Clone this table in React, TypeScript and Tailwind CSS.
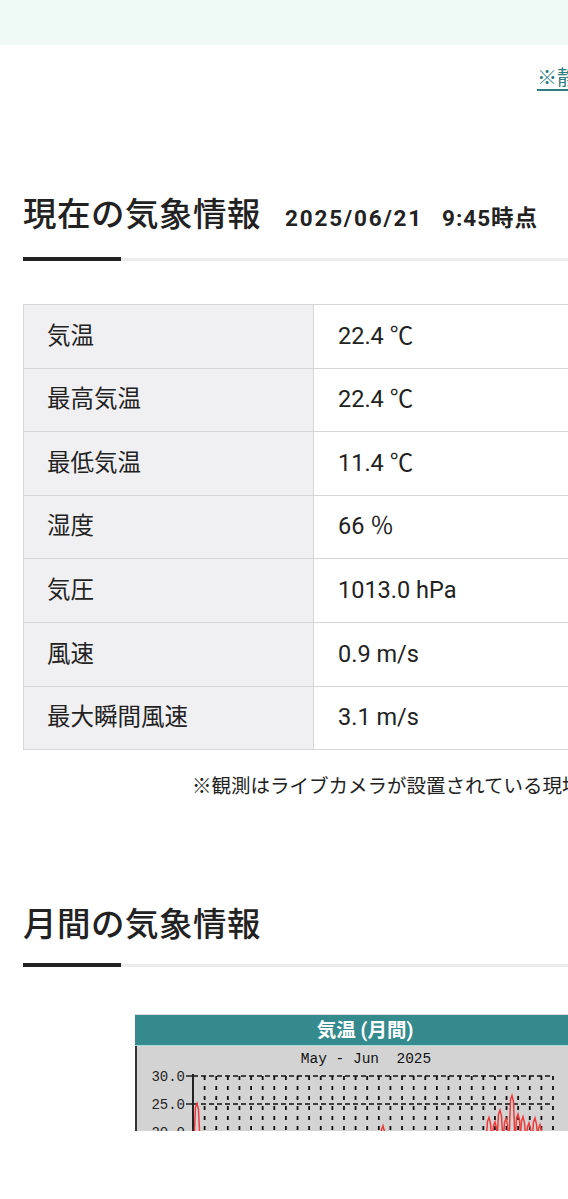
import React from "react";

const rows = [
  { label: "気温", value: "22.4 ℃" },
  { label: "最高気温", value: "22.4 ℃" },
  { label: "最低気温", value: "11.4 ℃" },
  { label: "湿度", value: "66 ％" },
  { label: "気圧", value: "1013.0 hPa" },
  { label: "風速", value: "0.9 m/s" },
  { label: "最大瞬間風速", value: "3.1 m/s" },
];

// value -> y inside the chart svg (30.0 at 30, 5 degrees = 28px)
const vy = (v: number) => 30 + (30 - v) * 5.6;

// spikes of the red line: [x, peak value]
const spikes: [number, number][] = [
  [62, 25.1],
  [248, 21.1],
  [354, 22.6],
  [360, 21.8],
  [365, 23.9],
  [371, 22.4],
  [377, 26.5],
  [383, 23.2],
  [388, 22.7],
  [394, 21.6],
  [400, 22.5],
  [405, 21.3],
];

function TempChart() {
  const left = 58;
  const right = 418;
  const cols = Array.from({ length: 32 }, (_, i) => left + (i * (right - left)) / 31);

  return (
    <svg width="460" height="86" className="block">
      <rect x="0" y="0" width="460" height="86" fill="#d3d3d3" />
      <line x1="1" y1="0" x2="1" y2="86" stroke="#333" strokeWidth="2" />
      <text x="231" y="17" textAnchor="middle" fontFamily="'Liberation Mono', monospace" fontSize="14.5" fill="#111">
        {"May - Jun\u00a0\u00a02025"}
      </text>
      {[
        [30, "30.0"],
        [58, "25.0"],
        [86, "20.0"],
      ].map(([y, t]) => (
        <g key={t as string}>
          <text x="50" y={(y as number) + 5} textAnchor="end" fontFamily="'Liberation Mono', monospace" fontSize="14" fill="#222">
            {t}
          </text>
          <line x1="51" y1={y as number} x2="58" y2={y as number} stroke="#222" strokeWidth="1.5" />
          <line x1={left} y1={y as number} x2={right} y2={y as number} stroke="#111" strokeWidth="1.6" strokeDasharray="5 3" />
        </g>
      ))}
      {cols.map((x, i) => (
        <line key={i} x1={x} y1="30" x2={x} y2="86" stroke="#111" strokeWidth="1.8" strokeDasharray="4 6" />
      ))}
      <line x1={left} y1="28" x2={left} y2="86" stroke="#222" strokeWidth="2" />
      {spikes.map(([x, v], i) => (
        <polyline
          key={i}
          points={`${x - 3},96 ${x - 1.5},${vy(v) + 4} ${x},${vy(v)} ${x + 1.5},${vy(v) + 6} ${x + 3},96`}
          fill="none"
          stroke="#f03a3a"
          strokeWidth="1.5"
        />
      ))}
    </svg>
  );
}

function SectionTitle({ children }: { children: React.ReactNode }) {
  return (
    <div>
      {children}
      <div className="mt-[13px] flex items-end h-[4px]">
        <div className="w-[98px] h-[4px] bg-[#222]" />
        <div className="flex-1 h-[3px] bg-[#ececec]" />
      </div>
    </div>
  );
}

export default function App() {
  return (
    <div className="w-[568px] min-h-[1199px] bg-white overflow-hidden text-[#222] font-['Roboto','Noto_Sans_CJK_JP',sans-serif]">
      <div className="h-[45px] bg-[#eff9f5]" />

      {/* link */}
      <div className="mt-[18px] pl-[537px] whitespace-nowrap text-[20px] leading-[30px]">
        <a href="#" className="text-[#2a7c7e] underline underline-offset-4">
          ※静岡県の気象情報はこちら
        </a>
      </div>

      <div className="w-[900px] pl-[23px] pr-[23px]">
        {/* current */}
        <div className="mt-[96px]">
          <SectionTitle>
            <div className="flex items-baseline whitespace-nowrap leading-[51px]">
              <h2 className="text-[33.5px] font-medium tracking-[0.5px]">現在の気象情報</h2>
              <span className="ml-[24px] text-[22.5px] font-bold tracking-[1.8px]">2025/06/21</span>
              <span className="ml-[19px] text-[22.5px] font-bold tracking-[1px]">9:45時点</span>
            </div>
          </SectionTitle>
        </div>

        <table className="mt-[43px] w-[800px] border-collapse text-[23.5px]">
          <tbody>
            {rows.map((r) => (
              <tr key={r.label} className="h-[63.6px]">
                <td className="w-[290px] border border-[#d6d6d6] bg-[#f0f0f2] pl-[23px] whitespace-nowrap">{r.label}</td>
                <td className="border border-[#d6d6d6] pl-[24px] whitespace-nowrap">{r.value}</td>
              </tr>
            ))}
          </tbody>
        </table>

        <p className="mt-[22px] pl-[169px] text-[19.5px] leading-[30px] whitespace-nowrap">
          ※観測はライブカメラが設置されている現地の観測機器によるものです。
        </p>

        {/* monthly */}
        <div className="mt-[97px]">
          <SectionTitle>
            <h2 className="text-[33.5px] font-medium leading-[51px] tracking-[0.5px] whitespace-nowrap">月間の気象情報</h2>
          </SectionTitle>
        </div>

        <div className="mt-[47px] ml-[112px] w-[460px] h-[117px] overflow-hidden">
          <div className="h-[31px] bg-[#358a8e] border-t border-[#dcdcdc] flex items-center justify-center text-white text-[19.5px] font-bold">
            気温 (月間)
          </div>
          <div className="h-[1px] bg-[#a6dcdc]" />
          <TempChart />
        </div>
      </div>
    </div>
  );
}
